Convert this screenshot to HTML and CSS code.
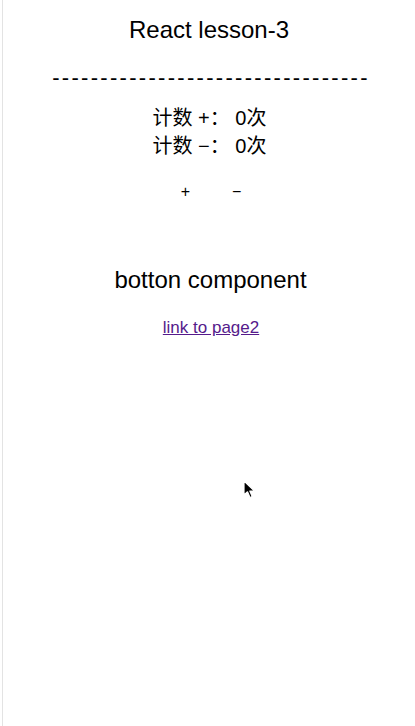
FILE: index.html
```html
<!DOCTYPE html>
<html lang="zh">
<head>
<meta charset="utf-8">
<title>React lesson-3</title>
<link rel="stylesheet" href="styles.css">
</head>
<body>
<div class="frame">
  <main class="app">
    <h2 class="title">React lesson-3</h2>
    <p class="divider">---------------------------------</p>
    <div class="counter">
      <p class="count-line">计数 +： 0次</p>
      <p class="count-line">计数 −： 0次</p>
    </div>
    <div class="controls">
      <button class="btn" type="button">+</button>
      <button class="btn" type="button">−</button>
    </div>
    <h3 class="component">botton component</h3>
    <a class="link" href="#page2">link to page2</a>
  </main>
  <svg class="cursor" width="14" height="20" viewBox="0 0 14 20" aria-hidden="true">
    <path d="M1 1 L1 15 L4.5 11.8 L7 17.5 L9.2 16.5 L6.8 11 L11.5 11 Z" fill="#000" stroke="#fff" stroke-width="1.2" stroke-linejoin="round"/>
  </svg>
</div>
</body>
</html>
```
FILE: styles.css
```css
html, body {
  margin: 0;
  padding: 0;
  background: #fff;
}
body {
  font-family: "Liberation Sans", "Noto Sans CJK SC", Arial, sans-serif;
  color: #000;
}
.frame {
  position: relative;
  margin-left: 2px;
  border-left: 1px solid #e3e3e3;
  min-height: 100vh;
  box-sizing: border-box;
}
.app {
  display: flex;
  flex-direction: column;
  align-items: center;
  padding-top: 16px;
}
.title {
  margin: 0;
  font-size: 24px;
  line-height: 28px;
  font-weight: normal;
}
.divider {
  margin: 20px 0 0;
  font-size: 22px;
  line-height: 28px;
  letter-spacing: 2.3px;
  padding-left: 4px;
}
.counter {
  margin-top: 12px;
  display: flex;
  flex-direction: column;
  align-items: center;
}
.count-line {
  margin: 0;
  font-size: 20px;
  line-height: 28px;
  padding-left: 1px;
}
.controls {
  margin-top: 22px;
  display: flex;
  gap: 34px;
  padding-left: 4px;
}
.btn {
  border: none;
  background: transparent;
  padding: 0 4px;
  font-family: "Liberation Sans", Arial, sans-serif;
  font-size: 16px;
  line-height: 20px;
  color: #000;
}
.component {
  margin: 64px 0 0;
  font-size: 24px;
  line-height: 28px;
  font-weight: normal;
  padding-left: 3px;
}
.link {
  margin-top: 24px;
  font-size: 17px;
  line-height: 20px;
  color: #551a8b;
  padding-left: 4px;
}
.cursor {
  position: absolute;
  left: 240px;
  top: 480px;
}
```
